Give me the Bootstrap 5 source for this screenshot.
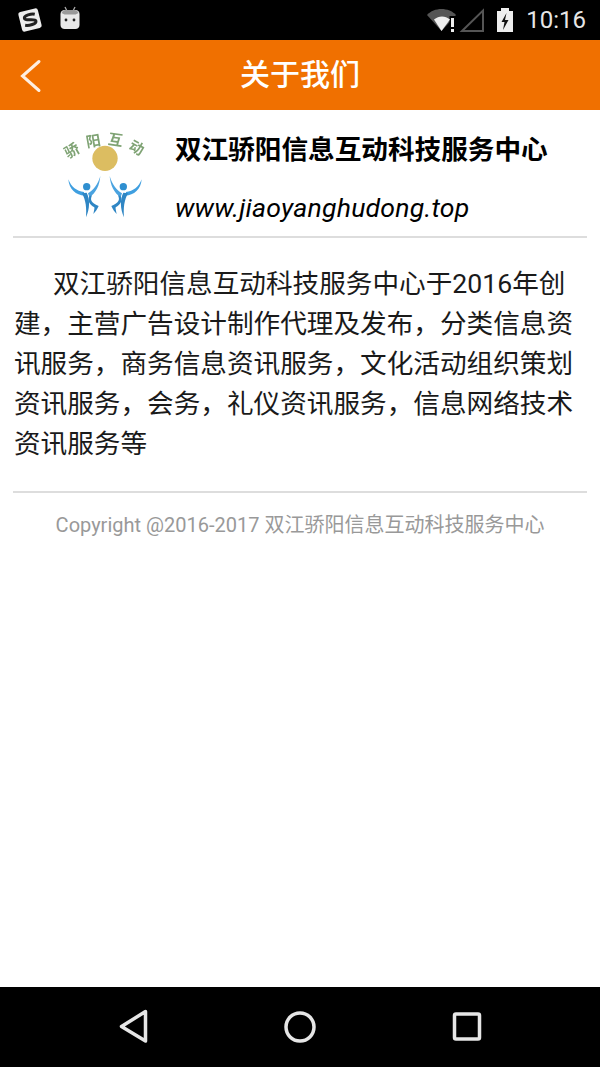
<!DOCTYPE html>
<html lang="zh-CN">
<head>
<meta charset="utf-8">
<title>关于我们</title>
<link href="https://cdn.jsdelivr.net/npm/bootstrap@5.3.0/dist/css/bootstrap.min.css" rel="stylesheet">
<style>
html,body{height:100%;margin:0}
body{font-family:Roboto,"Noto Sans CJK SC",sans-serif;background:#fff;color:#111}
.screen{height:1067px;width:600px;overflow:hidden}
.statusbar{height:40px;background:#000;color:#e6e6e6;font-size:24px;line-height:40px}
.appbar{height:70px;background:#f07000;color:#fff}
.appbar-title{font-size:30px;font-weight:500;line-height:70px}
.back-btn{left:19px;top:19px;position:absolute;line-height:0}
.brand-block{height:128px;margin:0 13px;border-bottom:2px solid #ddd}
.logo-slot{width:162px;padding-left:47px;padding-top:20px}
.logo-svg{display:block;filter:blur(.5px);overflow:visible}
.brand-name{font-size:26.64px;font-weight:700;line-height:32px;margin-top:24px;color:#000}
.brand-url{font-size:26.64px;font-style:italic;line-height:32px;margin-top:26px;letter-spacing:.2px;color:#000}
.about-text{font-size:26.64px;line-height:40px;text-indent:39px;margin:26px 14px 0;height:227px;color:#1a1a1a}
.rule-line{height:2px;background:#ddd;margin:0 13px}
.copy-text{font-size:20px;line-height:24px;color:#999;margin-top:20px}
.navbar-bottom{height:80px;background:#000}
.status-time{padding-right:14px;padding-left:12px}
</style>
</head>
<body>
<div class="screen d-flex flex-column">
  <div class="statusbar d-flex align-items-center justify-content-between flex-shrink-0">
    <svg width="100" height="40" viewBox="0 0 100 40" aria-hidden="true">
      <g transform="rotate(-14 30 20)">
        <rect x="20" y="10" width="20" height="20" rx="2.500" fill="#eee"/>
        <path d="M36 15.500c-3-1.500-11-1.500-11 1.500 0 3.300 10.500 2.500 10.500 5.500 0 3-8 3-11.500 1.500" fill="none" stroke="#222" stroke-width="3"/>
      </g>
      <path d="M65 7l2 4M75 7l-2 4" stroke="#aaa" stroke-width="1.300"/>
      <path d="M60.500 14c0-2.500 2-4 4-4h11c2 0 4 1.500 4 4v11c0 2.500-2 4-4 4h-11c-2 0-4-1.500-4-4z" fill="#e8e8e8"/>
      <path d="M61.500 13c1-2 2-3 4-3h9c2 0 3 1 4 3l-3 1.500h-11z" fill="#999"/>
      <circle cx="66" cy="20" r="1.400" fill="#222"/><circle cx="74" cy="20" r="1.400" fill="#222"/>
    </svg>
    <div class="d-flex align-items-center">
      <svg width="87" height="40" viewBox="0 0 87 40" aria-hidden="true">
        <path d="M0 15C7 7 22 7 29 15L14.500 31z" fill="#555"/>
        <rect x="22.500" y="16" width="7" height="18" fill="#000"/>
        <path d="M7 19.500c5-4 11-4 16 0l-8.500 11.500z" fill="#eee"/>
        <rect x="24" y="18" width="3" height="9" fill="#eee"/><rect x="24" y="29" width="3" height="3" fill="#eee"/>
        <path d="M35 31h21V10.500z" fill="none" stroke="#555" stroke-width="2"/>
        <path d="M70 11h4V8h8v3h4v21H70z" fill="#eee"/>
        <path d="M79.500 13l-5 9h3l-1.500 8 5.500-10h-3.500l1.500-7z" fill="#111"/>
      </svg>
      <span class="status-time">10:16</span>
    </div>
  </div>
  <div class="appbar position-relative text-center flex-shrink-0">
    <span class="back-btn"><svg width="24" height="34" viewBox="0 0 24 34" aria-hidden="true"><path d="M20 2.500L3.500 17 20 31.500" fill="none" stroke="#fff" stroke-width="3" stroke-linecap="round" opacity=".88"/></svg></span>
    <div class="appbar-title">关于我们</div>
  </div>
  <main class="flex-grow-1">
    <div class="brand-block d-flex">
      <div class="logo-slot flex-shrink-0">
        <svg class="logo-svg" width="90" height="92" viewBox="0 0 270 276" aria-hidden="true">
          <g fill="#7fa374" font-family="'Noto Sans CJK SC',sans-serif" font-size="44" font-weight="700" text-anchor="middle">
            <text transform="translate(36 62) rotate(-30)" y="15">骄</text>
            <text transform="translate(100 34) rotate(-10)" y="15">阳</text>
            <text transform="translate(166 30) rotate(8)" y="15">互</text>
            <text transform="translate(230 54) rotate(28)" y="15">动</text>
          </g>
          <circle cx="135" cy="85" r="38" fill="#dcbd61"/>
          <defs>
            <g id="fig">
              <circle cx="80" cy="170" r="11" fill="#2f8fd0"/>
              <path d="M25 148C34 172 50 183 72 186L74 197C48 196 27 178 25 148z" fill="#3f9fe0"/>
              <path d="M66 190L80 188C90 208 90 235 78 262C80 235 78 212 66 190z" fill="#2f86c4"/>
              <path d="M121 138C119 165 108 190 88 201L84 190C100 180 113 165 121 138z" fill="#4aa3e0"/>
              <path d="M96 196C90 210 92 218 116 228C112 238 106 246 100 252C102 242 104 236 103 232C88 224 82 212 88 198z" fill="#2f86c4"/>
            </g>
          </defs>
          <use href="#fig"/>
          <use href="#fig" transform="matrix(-1 0 0 1 270 0)"/>
        </svg>
      </div>
      <div>
        <div class="brand-name">双江骄阳信息互动科技服务中心</div>
        <div class="brand-url">www.jiaoyanghudong.top</div>
      </div>
    </div>
    <p class="about-text mb-0">双江骄阳信息互动科技服务中心于2016年创建，主营广告设计制作代理及发布，分类信息资讯服务，商务信息资讯服务，文化活动组织策划资讯服务，会务，礼仪资讯服务，信息网络技术资讯服务等</p>
    <div class="rule-line"></div>
    <div class="copy-text text-center">Copyright @2016-2017 双江骄阳信息互动科技服务中心</div>
  </main>
  <div class="navbar-bottom d-flex flex-shrink-0">
    <svg width="600" height="80" viewBox="0 0 600 80" aria-hidden="true">
      <g fill="none" stroke="#e6e6e6" stroke-width="3.500" stroke-linejoin="round">
        <path d="M145.500 24.500L121.500 39.500 145.500 54z"/>
        <circle cx="300" cy="40" r="14"/>
        <rect x="454.500" y="27" width="25" height="25" rx="1.500"/>
      </g>
    </svg>
  </div>
</div>
</body>
</html>
